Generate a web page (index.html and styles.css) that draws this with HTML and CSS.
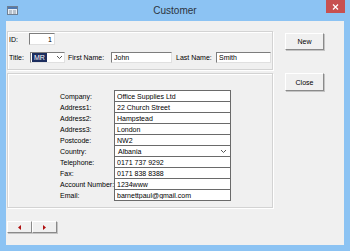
FILE: index.html
```html
<!DOCTYPE html>
<html lang="en">
<head>
    <meta charset="UTF-8">
    <title>Customer</title>
    <link rel="stylesheet" href="styles.css">
</head>
<body>
<div class="window">
    <div class="titlebar">
        <svg class="app-icon" width="11" height="9" viewBox="0 0 11 9">
            <rect x="0.5" y="0.5" width="10" height="8" fill="#e8eef5" stroke="#6f7f92"/>
            <rect x="1" y="1" width="9" height="2" fill="#4f79b0"/>
            <rect x="2" y="4.5" width="3" height="1" fill="#8a96a4"/>
            <rect x="6" y="4.5" width="3" height="1" fill="#8a96a4"/>
            <rect x="2" y="6.5" width="3" height="1" fill="#8a96a4"/>
            <rect x="6" y="6.5" width="3" height="1" fill="#8a96a4"/>
        </svg>
        <span class="title">Customer</span>
        <span class="close-box">
            <svg width="7" height="6" viewBox="0 0 7 6"><path d="M1 0.5 L6 5.5 M6 0.5 L1 5.5" stroke="#fff" stroke-width="1.2"/></svg>
        </span>
    </div>

    <div class="client">
        <div class="form-area">
            <!-- header fields -->
            <div class="panel panel-top">
                <div class="row row-id">
                    <label class="lbl lbl-id">ID:</label>
                    <input class="field sunken field-id" value="1" readonly>
                </div>
                <div class="row row-name">
                    <label class="lbl lbl-title">Title:</label>
                    <div class="combo sunken combo-title">
                        <span class="combo-text"><span class="selected">MR</span></span>
                        <span class="combo-arrow">
                            <svg width="5" height="3" viewBox="0 0 5 3"><path d="M0 0 L2.5 2.5 L5 0" fill="none" stroke="#555" stroke-width="1"/></svg>
                        </span>
                    </div>
                    <label class="lbl lbl-first">First Name:</label>
                    <input class="field sunken field-first" value="John" readonly>
                    <label class="lbl lbl-last">Last Name:</label>
                    <input class="field sunken field-last" value="Smith" readonly>
                </div>
            </div>

            <!-- address details -->
            <div class="panel panel-details">
                <div class="details-grid">
                    <label class="lbl">Company:</label>
                    <input class="field flat" value="Office Supplies Ltd" readonly>
                    <label class="lbl">Address1:</label>
                    <input class="field flat" value="22 Church Street" readonly>
                    <label class="lbl">Address2:</label>
                    <input class="field flat" value="Hampstead" readonly>
                    <label class="lbl">Address3:</label>
                    <input class="field flat" value="London" readonly>
                    <label class="lbl">Postcode:</label>
                    <input class="field flat" value="NW2" readonly>
                    <label class="lbl">Country:</label>
                    <div class="field flat combo">
                        <span class="combo-text">Albania</span>
                        <span class="combo-arrow">
                            <svg width="5" height="3" viewBox="0 0 5 3"><path d="M0 0 L2.5 2.5 L5 0" fill="none" stroke="#555" stroke-width="1"/></svg>
                        </span>
                    </div>
                    <label class="lbl">Telephone:</label>
                    <input class="field flat" value="0171 737 9292" readonly>
                    <label class="lbl">Fax:</label>
                    <input class="field flat" value="0171 838 8388" readonly>
                    <label class="lbl">Account Number:</label>
                    <input class="field flat" value="1234www" readonly>
                    <label class="lbl">Email:</label>
                    <input class="field flat" value="barnettpaul@gmail.com" readonly>
                </div>
            </div>

            <div class="nav">
                <button class="btn nav-btn">
                    <svg width="3" height="5" viewBox="0 0 3 5"><path d="M3 0 L0 2.5 L3 5 Z" fill="#b01010"/></svg>
                </button>
                <button class="btn nav-btn">
                    <svg width="3" height="5" viewBox="0 0 3 5"><path d="M0 0 L3 2.5 L0 5 Z" fill="#b01010"/></svg>
                </button>
            </div>
        </div>

        <div class="actions">
            <button class="btn action-btn">New</button>
            <button class="btn action-btn btn-close">Close</button>
        </div>
    </div>
</div>
</body>
</html>
```

FILE: styles.css
```css
* {
    box-sizing: border-box;
}

body {
    margin: 0;
    font-family: "Liberation Sans", Arial, sans-serif;
    font-size: 7px;
    color: #000;
}

.window {
    width: 350px;
    height: 251px;
    background-color: #8cc3f3;
    display: flex;
    flex-direction: column;
}

/* Title bar */
.titlebar {
    height: 21px;
    display: grid;
    grid-template-columns: 1fr auto 1fr;
    align-items: start;
}

.app-icon {
    margin: 6px 0 0 7px;
}

.title {
    font-size: 10px;
    line-height: 21px;
    color: #2b3440;
}

.close-box {
    justify-self: end;
    width: 19px;
    height: 13px;
    margin-right: 5px;
    background-color: #c75050;
    display: flex;
    align-items: center;
    justify-content: center;
}

/* Client area */
.client {
    flex: 1;
    margin: 0 6px 6px 6px;
    background-color: #f0f0f0;
    display: flex;
    padding: 10px 0 0 1px;
}

.form-area {
    width: 266px;
}

.panel {
    border: 1px solid #d3d3d3;
    box-shadow: inset 1px 1px 0 #fff, 1px 1px 0 #fff;
}

.panel-top {
    height: 39px;
}

.panel-details {
    height: 135px;
    margin-top: 3px;
    padding: 16px 0 0 51px;
}

.row {
    display: flex;
    align-items: center;
}

.row-id {
    margin-top: 1px;
    height: 12px;
}

.row-name {
    margin-top: 7px;
    height: 11px;
}

.lbl {
    white-space: nowrap;
    padding-left: 1px;
}

.lbl-id { width: 21px; }
.lbl-title { width: 22px; }
.lbl-first { width: 44px; margin-left: 2px; }
.lbl-last { width: 41px; margin-left: 3px; }

.field {
    font-family: inherit;
    font-size: 7px;
    color: #000;
    background-color: #fff;
    padding: 0 2px;
    margin: 0;
    outline: none;
}

.sunken {
    border: 1px solid;
    border-color: #7d7d7d #e0e0e0 #e0e0e0 #7d7d7d;
}

.flat {
    border: 1px solid #6a6a6a;
}

.field-id {
    width: 26px;
    height: 12px;
    text-align: right;
}

.field-first {
    width: 61px;
    height: 11px;
}

.field-last {
    width: 55px;
    height: 11px;
}

/* Combo boxes */
.combo {
    display: flex;
    align-items: center;
    background-color: #fff;
}

.combo-title {
    width: 35px;
    height: 11px;
}

.combo-text {
    flex: 1;
    padding-left: 1px;
    line-height: 9px;
}

.selected {
    display: inline-block;
    background-color: #1c2d5e;
    color: #fff;
    padding: 0 2px;
    line-height: 9px;
}

.combo-arrow {
    width: 10px;
    height: 100%;
    display: flex;
    align-items: center;
    justify-content: center;
}

.details-grid {
    display: grid;
    grid-template-columns: 55px 117px;
    grid-auto-rows: 11px;
}

.details-grid .lbl {
    line-height: 13px;
}

.details-grid .field {
    height: 12px;
    width: 117px;
}

/* Buttons */
.btn {
    font-family: inherit;
    font-size: 7px;
    color: #000;
    background-color: #f0f0f0;
    border: 1px solid;
    border-color: #fff #8a8a8a #8a8a8a #fff;
    box-shadow: 1px 1px 0 #c4c4c4;
    padding: 0;
    margin: 0;
    display: flex;
    align-items: center;
    justify-content: center;
}

.nav {
    display: flex;
    margin-top: 13px;
}

.nav-btn {
    width: 25px;
    height: 12px;
}

.actions {
    margin-left: 12px;
    padding-top: 2px;
    display: flex;
    flex-direction: column;
}

.action-btn {
    width: 39px;
    height: 17px;
}

.btn-close {
    margin-top: 23px;
    height: 18px;
}
```
